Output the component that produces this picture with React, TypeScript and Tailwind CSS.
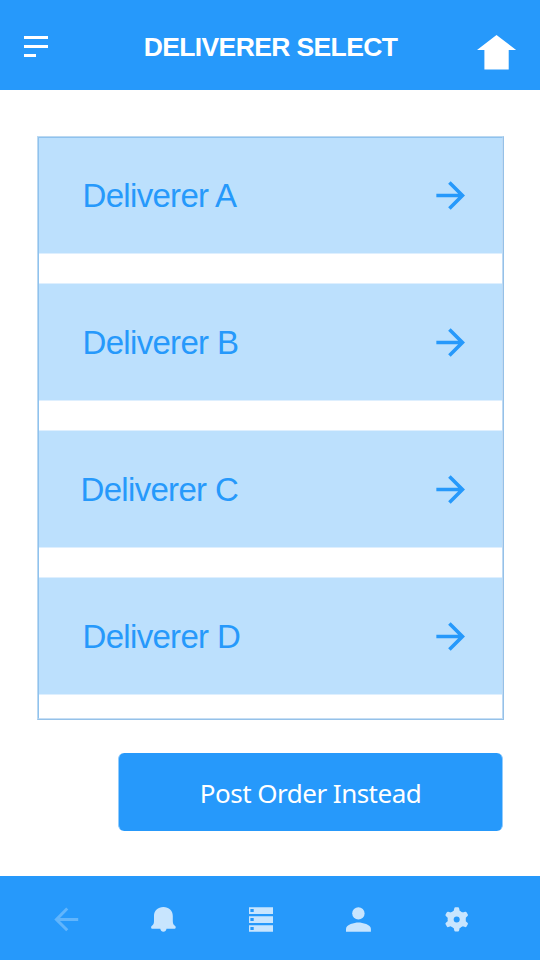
const deliverers = [
  { name: 'Deliverer A', row: 'h-[116px] border-b', text: 'pl-[43.5px]', arrow: '-mt-px' },
  { name: 'Deliverer B', row: 'h-[118px] border-y', text: 'pl-[43.5px] pt-0.5', arrow: '' },
  { name: 'Deliverer C', row: 'h-[118px] border-y', text: 'pl-[41.5px] pt-0.5', arrow: '' },
  { name: 'Deliverer D', row: 'h-[118px] border-y', text: 'pl-[43.5px] pt-0.5', arrow: '' },
];

function Header() {
  return (
    <header className="flex h-[90px] shrink-0 justify-between bg-[#2699fb] pl-6 pr-[23px]">
      <button aria-label="Menu" className="mt-9 flex h-[21px] w-6 flex-col gap-1.5">
        <span className="h-[3px] w-6 bg-white" />
        <span className="h-[3px] w-6 bg-white" />
        <span className="h-[3px] w-3 bg-white" />
      </button>
      <h1 className="ml-4 mt-[31px] h-8 whitespace-nowrap font-['Liberation_Sans',Arial,sans-serif] text-[26.5px] font-bold leading-8 tracking-[-0.62px] text-white">
        DELIVERER SELECT
      </h1>
      <svg className="mt-[34px] h-9 w-10" viewBox="0 0 40 36" fill="#fff" aria-label="Home">
        <path d="M19.5 .9 39.1 16H31.7v19.5H7.4V16H0z" />
      </svg>
    </header>
  );
}

function DelivererList() {
  return (
    <div className="ml-[37px] mt-[46px] h-[584px] w-[467px] border border-b-[#95c1e8] border-l-[#bcd9f1] border-r-[#95c1e8] border-t-[#bcd9f1]">
      <ul className="flex h-full flex-col gap-[29px] border border-b-[#c5def5] border-l-[#8fc2ee] border-r-[#bfd9f3] border-t-[#8fc2ee]">
        {deliverers.map((d) => (
          <li
            key={d.name}
            className={`flex shrink-0 items-center justify-between border-[#deeffe] bg-[#bce0fd] pr-[37px] ${d.row}`}
          >
            <span
              className={`whitespace-nowrap font-['Liberation_Sans',Arial,sans-serif] text-[33px] leading-9 tracking-[-0.68px] text-[#2699fb] ${d.text}`}
            >
              {d.name}
            </span>
            <svg className={`h-[29px] w-[29px] ${d.arrow}`} viewBox="3.8 3.9 16.2 16.2" fill="#2699fb">
              <path d="M12 4l-1.41 1.41L16.17 11H4v2h12.17l-5.58 5.59L12 20l8-8z" />
            </svg>
          </li>
        ))}
      </ul>
    </div>
  );
}

const gearTeeth = [0, 60, 120, 180, 240, 300];

function BottomNav() {
  return (
    <nav className="mt-auto grid h-[84px] shrink-0 grid-cols-[97px_98px_97px_98px_25px] items-start bg-[#2699fb] pl-[54px] pt-[31px] text-[#c8e5fe]">
      <svg className="h-[25px] w-[25px]" viewBox="0 0 25 25" fill="#61b5fc">
        <path d="M12.2 .5 14.3 2.6 6 10.9H24.2v3H6l8.3 8.3-2.1 2.1L.3 12.4z" />
      </svg>
      <svg className="h-[25px] w-[25px]" viewBox="0 0 25 25" fill="currentColor">
        <path d="M12.4 .1C6.9 .1 3 3.9 3 9v5c0 2.4-.5 3.6-1.8 4.6C.4 19.2.1 19.7.1 20.4c0 .8.6 1.4 1.5 1.4h7.7c.3 1.7 1.5 3 3.1 3s2.8-1.3 3.1-3h7.7c.9 0 1.5-.6 1.5-1.4 0-.7-.3-1.2-1.1-1.8-1.3-1-1.8-2.2-1.8-4.6V9c0-5.1-3.9-8.9-9.4-8.9z" />
      </svg>
      <svg className="h-[25px] w-[25px]" viewBox="0 0 25 25" fill="currentColor">
        <path
          fillRule="evenodd"
          d="M0 .3h24v6.6H0zM1.4 2v3.1h3.3V2zM0 9.3h24v6.6H0zM1.4 11v3.1h3.3V11zM0 18.3h24v6.5H0zM1.4 20v3.1h3.3V20z"
        />
      </svg>
      <svg className="h-[25px] w-[25px]" viewBox="0 0 25 25" fill="currentColor">
        <circle cx="12.4" cy="6.4" r="6.2" />
        <path d="M0 24.8v-3.1c0-4.1 8.3-6.3 12.4-6.3s12.5 2.2 12.5 6.3v3.1z" />
      </svg>
      <svg className="h-[25px] w-[25px]" viewBox="0 0 25 25" fill="currentColor">
        <circle cx="12.7" cy="12.4" r="9" />
        {gearTeeth.map((angle) => (
          <path
            key={angle}
            transform={`rotate(${angle} 12.7 12.4)`}
            d="M11.4 .3h2.6q.9 0 1.1 1l.6 2.4 1.4 1.2H8.3l1.4-1.2 .6-2.4q.2-1 1.1-1z"
          />
        ))}
        <circle cx="12.7" cy="12.4" r="3" fill="#2699fb" />
      </svg>
    </nav>
  );
}

export default function App() {
  return (
    <div className="flex h-[960px] w-[540px] flex-col overflow-hidden bg-white">
      <Header />
      <main>
        <DelivererList />
        <button className="ml-[118px] mt-[33px] flex h-[78px] w-[385px] items-center justify-center rounded-md border-x border-[#92ccfd] bg-[#2699fb] pt-0.5 font-['Noto_Sans','Open_Sans',sans-serif] text-[26px] leading-9 tracking-[-0.52px] text-white">
          Post Order Instead
        </button>
      </main>
      <BottomNav />
    </div>
  );
}
